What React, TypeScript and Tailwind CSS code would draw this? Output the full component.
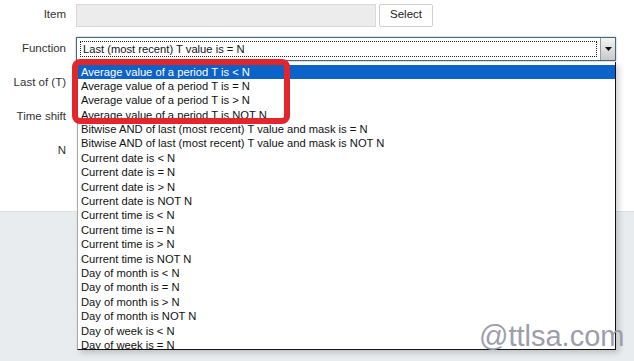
import React from "react";

const items = [
  "Average value of a period T is < N",
  "Average value of a period T is = N",
  "Average value of a period T is > N",
  "Average value of a period T is NOT N",
  "Bitwise AND of last (most recent) T value and mask is = N",
  "Bitwise AND of last (most recent) T value and mask is NOT N",
  "Current date is < N",
  "Current date is = N",
  "Current date is > N",
  "Current date is NOT N",
  "Current time is < N",
  "Current time is = N",
  "Current time is > N",
  "Current time is NOT N",
  "Day of month is < N",
  "Day of month is = N",
  "Day of month is > N",
  "Day of month is NOT N",
  "Day of week is < N",
  "Day of week is = N",
];

function Row({ label, children }: { label: string; children?: React.ReactNode }) {
  return (
    <div className="flex items-center h-[24px]">
      <div className="w-[66px] text-right text-[11.5px] text-[#333]">{label}</div>
      <div className="ml-[10px] flex items-center h-full">{children}</div>
    </div>
  );
}

export default function App() {
  return (
    <div
      className="relative w-[634px] h-[361px] overflow-hidden bg-[#e9ecef]"
      style={{ fontFamily: '"Liberation Sans", Arial, Helvetica, sans-serif' }}
    >
      <div className="h-[212px] bg-white border-b border-[#dfe2e5] flex flex-col gap-[10px] pt-[3px]">
        <Row label="Item">
          <div className="w-[300px] h-[23px] bg-[#ececec] border border-[#d9d9d9]" />
          <button className="ml-[3px] w-[54px] h-[23px] bg-white border border-[#cfcfcf] rounded-[2px] text-[11.5px] text-[#222]">
            Select
          </button>
        </Row>
        <Row label="Function">
          <div className="w-[540px] h-[24px] border border-[#4a6575] bg-white flex shadow-[0_0_2px_#9fb7c7]">
            <div className="flex-1 m-[3px] border border-dotted border-[#222] flex items-center pl-[2px] text-[11.2px] text-[#111]">
              Last (most recent) T value is = N
            </div>
            <div className="w-[15px] h-full border-l border-[#9a9a9a] bg-gradient-to-b from-[#f4f4f4] to-[#c9c9c9] flex items-center justify-center">
              <svg width="7" height="4" viewBox="0 0 7 4">
                <path d="M0 0 L7 0 L3.5 4 Z" fill="#111" />
              </svg>
            </div>
          </div>
        </Row>
        <Row label="Last of (T)" />
        <Row label="Time shift" />
        <Row label="N" />
      </div>

      {/* Dropdown list */}
      <div className="absolute left-[77px] top-[62px] w-[539px] h-[288px] bg-white border-l border-l-[#a8a8a8] border-r border-r-[#111] border-b border-b-[#111] overflow-hidden shadow-[3px_3px_6px_rgba(0,0,0,0.18)] pt-[2.5px]">
        {items.map((t, i) => (
          <div
            key={t}
            className={
              "h-[14.4px] leading-[14.4px] pl-[3px] text-[11.2px] whitespace-nowrap " +
              (i === 0 ? "bg-[#0b62c9] text-white" : "text-[#111]")
            }
          >
            {t}
          </div>
        ))}
      </div>

      {/* Red annotation */}
      <div className="absolute left-[72px] top-[59px] w-[218px] h-[65px] border-[6px] border-[#e3252c] rounded-[8px]" />

      {/* Watermark */}
      <div className="absolute left-[479px] top-[319px] text-[29px] leading-[34px] text-[#9d9dab]">
        @ttlsa.com
      </div>
    </div>
  );
}
